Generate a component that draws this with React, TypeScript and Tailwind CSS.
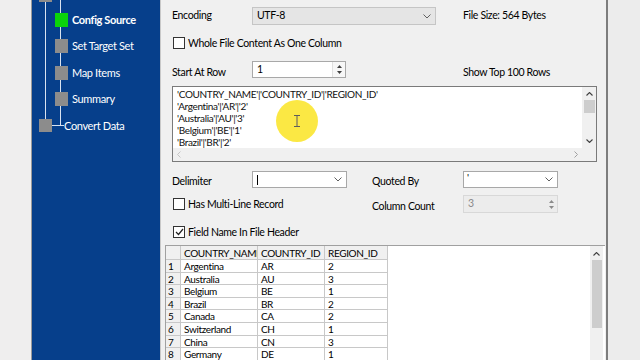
import React from "react";

const F = { fontFamily: 'Lato, "Noto Sans", sans-serif' };

function Chevron({ color = "#606060" }: { color?: string }) {
  return (
    <svg width="8" height="5" viewBox="0 0 8 5">
      <path d="M0.5 0.5 L4 4 L7.5 0.5" fill="none" stroke={color} strokeWidth="1" />
    </svg>
  );
}

function SpinArrows({ color = "#404040" }: { color?: string }) {
  return (
    <div className="flex h-full w-[12px] flex-col items-center justify-center gap-[3px]">
      <svg width="5" height="3" viewBox="0 0 5 3">
        <path d="M0 3 L2.5 0 L5 3 Z" fill={color} />
      </svg>
      <svg width="5" height="3" viewBox="0 0 5 3">
        <path d="M0 0 L2.5 3 L5 0 Z" fill={color} />
      </svg>
    </div>
  );
}

function CheckBox({ checked, label }: { checked?: boolean; label: string }) {
  return (
    <div className="flex items-center gap-[3px]">
      <div className="flex h-[12px] w-[12px] items-center justify-center border border-[#333333] bg-white">
        {checked && (
          <svg width="9" height="8" viewBox="0 0 9 8">
            <path d="M1 4 L3.5 6.5 L8 1" fill="none" stroke="#222" strokeWidth="1.2" />
          </svg>
        )}
      </div>
      <span className="text-[10.5px] leading-none text-black">{label}</span>
    </div>
  );
}

const treeItems = [
  { label: "Config Source", active: true },
  { label: "Set Target Set" },
  { label: "Map Items" },
  { label: "Summary" },
];

const rows = [
  ["Argentina", "AR", "2"],
  ["Australia", "AU", "3"],
  ["Belgium", "BE", "1"],
  ["Brazil", "BR", "2"],
  ["Canada", "CA", "2"],
  ["Switzerland", "CH", "1"],
  ["China", "CN", "3"],
  ["Germany", "DE", "1"],
];

const textLines = [
  "'COUNTRY_NAME'|'COUNTRY_ID'|'REGION_ID'",
  "'Argentina'|'AR'|'2'",
  "'Australia'|'AU'|'3'",
  "'Belgium'|'BE'|'1'",
  "'Brazil'|'BR'|'2'",
];

export default function App() {
  return (
    <div className="flex h-[360px] w-[640px] overflow-hidden bg-[#f0f0f0] tracking-[-0.35px]" style={F}>
      {/* left light strip */}
      <div className="h-full w-[32px] border-r border-[#9a9a9a] bg-[#efeeee]" />

      {/* blue nav panel */}
      <div className="relative h-full w-[128px] bg-[#063f8b]">
        <svg className="absolute left-0 top-0" width="128" height="140">
          <line x1="13.5" y1="0" x2="13.5" y2="120" stroke="#d8e2f0" strokeWidth="1" />
          <line x1="28.5" y1="0" x2="28.5" y2="125.5" stroke="#d8e2f0" strokeWidth="1" />
          <line x1="19" y1="125.5" x2="32" y2="125.5" stroke="#d8e2f0" strokeWidth="1" />
          <rect x="7" y="-6" width="13" height="8" fill="#8c8c8c" />
        </svg>
        <div className="relative flex flex-col pt-[13px]">
          {treeItems.map((it) => (
            <div key={it.label} className="flex h-[26.4px] items-start">
              <div
                className={
                  "ml-[23px] h-[14px] w-[13px] " + (it.active ? "bg-[#0bd40b]" : "bg-[#8c8c8c]")
                }
              />
              <span
                className={
                  "ml-[4px] text-[11px] leading-[14px] text-white " + (it.active ? "font-bold" : "")
                }
              >
                {it.label}
              </span>
            </div>
          ))}
          <div className="flex h-[26px] items-start">
            <div className="ml-[7px] h-[13px] w-[13px] bg-[#8c8c8c]" />
            <span className="ml-[12px] text-[11px] leading-[13px] text-white">Convert Data</span>
          </div>
        </div>
      </div>

      {/* main panel */}
      <div className="relative flex h-full w-[446px] flex-col border-l border-[#c8c8c8] bg-[#f0f0f0] text-black">
        {/* Encoding row */}
        <div className="ml-[11px] mt-[7px] flex h-[18px] items-center">
          <span className="w-[80px] text-[10.5px]">Encoding</span>
          <div className="flex h-[18px] w-[184px] items-center justify-between border border-[#c5c5c5] bg-[#e5e5e5] pl-[4px] pr-[4px]">
            <span className="text-[10.5px]">UTF-8</span>
            <Chevron />
          </div>
          <span className="ml-[27px] text-[10.5px]">File Size: 564 Bytes</span>
        </div>

        {/* whole file checkbox */}
        <div className="ml-[12px] mt-[12px] flex h-[12px] items-center">
          <CheckBox label="Whole File Content As One Column" />
        </div>

        {/* start row */}
        <div className="ml-[11px] mt-[12px] flex h-[17px] items-center">
          <span className="mt-[6px] w-[80px] text-[10.5px]">Start At Row</span>
          <div className="flex h-[17px] w-[94px] items-center justify-between border border-[#a8a8a8] bg-white pl-[4px]">
            <span className="text-[10.5px]">1</span>
            <div className="h-full border-l border-[#e0e0e0] bg-[#f7f7f7]">
              <SpinArrows />
            </div>
          </div>
          <span className="ml-[117px] mt-[6px] text-[10.5px]">Show Top 100 Rows</span>
        </div>

        {/* text area */}
        <div className="relative ml-[11px] mt-[8px] flex h-[76px] w-[425px] border border-[#7a7a7a] bg-white">
          <div className="flex flex-1 flex-col">
            <div className="flex-1 pl-[4px] pt-[1px]">
              {textLines.map((l) => (
                <div key={l} className="h-[12px] text-[10px] leading-[12px] text-[#111]">
                  {l}
                </div>
              ))}
            </div>
            <div className="flex h-[13px] items-center justify-between bg-[#f0f0f0] px-[4px]">
              <svg width="4" height="7" viewBox="0 0 4 7">
                <path d="M3.5 0.5 L0.5 3.5 L3.5 6.5" fill="none" stroke="#c4c4c4" strokeWidth="1" />
              </svg>
              <svg width="4" height="7" viewBox="0 0 4 7">
                <path d="M0.5 0.5 L3.5 3.5 L0.5 6.5" fill="none" stroke="#a0a0a0" strokeWidth="1" />
              </svg>
            </div>
          </div>
          <div className="flex w-[14px] flex-col items-center bg-[#f0f0f0]">
            <svg className="mt-[5px]" width="7" height="4" viewBox="0 0 7 4">
              <path d="M0.5 3.5 L3.5 0.5 L6.5 3.5" fill="none" stroke="#404040" strokeWidth="1.1" />
            </svg>
            <div className="mt-[4px] h-[13px] w-[11px] bg-[#cdcdcd]" />
            <div className="flex-1" />
            <svg className="mb-[18px]" width="7" height="4" viewBox="0 0 7 4">
              <path d="M0.5 0.5 L3.5 3.5 L6.5 0.5" fill="none" stroke="#404040" strokeWidth="1.1" />
            </svg>
          </div>

          {/* highlight cursor overlay */}
          <div className="absolute left-[103px] top-[13px] flex h-[42px] w-[42px] items-center justify-center rounded-full bg-[#fbe73b] opacity-95 blur-[0.6px]">
            <svg width="6" height="12" viewBox="0 0 6 12">
              <path d="M0 0.5 H6 M3 0.5 V11.5 M0 11.5 H6" fill="none" stroke="#555" strokeWidth="1" />
            </svg>
          </div>
        </div>

        {/* delimiter row */}
        <div className="ml-[11px] mt-[9px] flex h-[17px] items-center">
          <span className="mt-[4px] w-[80px] text-[10.5px]">Delimiter</span>
          <div className="flex h-[17px] w-[95px] items-center justify-between border border-[#a8a8a8] bg-white pl-[4px] pr-[4px]">
            <span className="h-[10px] w-px bg-black" />
            <Chevron />
          </div>
          <span className="ml-[25px] mt-[4px] w-[91px] text-[10.5px]">Quoted By</span>
          <div className="flex h-[17px] w-[95px] items-start justify-between border border-[#a8a8a8] bg-white pl-[3px] pr-[4px]">
            <span className="text-[10px] leading-[10px]">'</span>
            <span className="mt-[5px]">
              <Chevron />
            </span>
          </div>
        </div>

        {/* multi-line row */}
        <div className="ml-[12px] mt-[7px] flex h-[18px] items-center">
          <div className="w-[199px]">
            <CheckBox label="Has Multi-Line Record" />
          </div>
          <span className="mt-[5px] w-[91px] text-[10.5px]">Column Count</span>
          <div className="flex h-[18px] w-[95px] items-center justify-between border border-[#d8d8d8] bg-[#ececec] pl-[4px]">
            <span className="text-[10.5px] text-[#8a8a8a]">3</span>
            <SpinArrows color="#8a8a8a" />
          </div>
        </div>

        {/* field name checkbox */}
        <div className="ml-[12px] mt-[13px] flex h-[12px] items-center">
          <CheckBox checked label="Field Name In File Header" />
        </div>

        {/* grid */}
        <div className="ml-[4px] mt-[7px] flex h-[120px] w-[440px] border-l border-t border-[#a0a0a0] bg-white">
          <div className="flex-1">
            <div className="flex">
              <div className="flex flex-col">
                <div className="flex h-[14px] text-[10px] leading-[14px]">
                  <div className="w-[15px] border-b border-r border-[#c8c8c8] bg-[#f0f0f0]" />
                  <div className="w-[77px] overflow-hidden whitespace-nowrap border-b border-r border-[#c8c8c8] bg-[#f0f0f0] pl-[3px]">
                    COUNTRY_NAME
                  </div>
                  <div className="w-[67px] border-b border-r border-[#c8c8c8] bg-[#f0f0f0] pl-[3px]">COUNTRY_ID</div>
                  <div className="w-[63px] border-b border-r border-[#c8c8c8] bg-[#f0f0f0] pl-[3px]">REGION_ID</div>
                </div>
                {rows.map((r, i) => (
                  <div key={r[0]} className="flex h-[12.6px] text-[10px] leading-[12px]">
                    <div className="w-[15px] border-b border-r border-[#c8c8c8] bg-[#f0f0f0] pl-[2px]">{i + 1}</div>
                    <div className="w-[77px] border-b border-r border-[#c8c8c8] pl-[3px]">{r[0]}</div>
                    <div className="w-[67px] border-b border-r border-[#c8c8c8] pl-[3px]">{r[1]}</div>
                    <div className="w-[63px] border-b border-r border-[#c8c8c8] pl-[3px]">{r[2]}</div>
                  </div>
                ))}
              </div>
            </div>
          </div>
          <div className="mr-[2px] flex w-[13px] flex-col items-center bg-[#f0f0f0]">
            <svg className="mt-[6px]" width="7" height="4" viewBox="0 0 7 4">
              <path d="M0.5 3.5 L3.5 0.5 L6.5 3.5" fill="none" stroke="#404040" strokeWidth="1.1" />
            </svg>
            <div className="mt-[4px] h-[68px] w-[10px] bg-[#cdcdcd]" />
          </div>
        </div>
      </div>

      {/* right border area */}
      <div className="h-full w-[2px] bg-[#7d7d7d]" />
      <div className="h-full flex-1 bg-[#ececec]" />
    </div>
  );
}
